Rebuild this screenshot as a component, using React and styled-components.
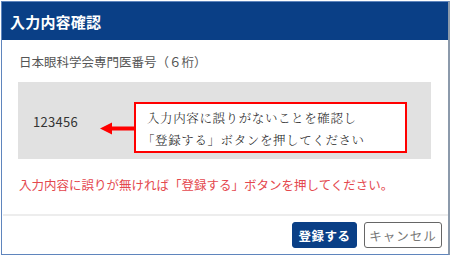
import React from "react";
import styled, { createGlobalStyle } from "styled-components";

const Global = createGlobalStyle`
  html, body { margin: 0; padding: 0; background: #ffffff; }
  body { font-family: "Noto Sans CJK JP", "Noto Sans", sans-serif; }
  * { box-sizing: border-box; }
`;

const Dialog = styled.div`
  margin: 1px 0 0 1px;
  width: 449px;
  height: 254px;
  border-left: 1px solid #5f85bd;
  border-bottom: 1px solid #5f85bd;
  border-right: 2px solid #8c9aab;
  border-top: 1px solid #5f85bd;
  background: #fff;
  display: flex;
  flex-direction: column;
`;

const Header = styled.div`
  height: 38px;
  background: #0a3f86;
  color: #fff;
  font-size: 15px;
  font-weight: 700;
  display: flex;
  align-items: center;
  padding-left: 8px;
  letter-spacing: 0.2px;
`;

const Body = styled.div`
  padding: 12px 17px 0 16px;
  flex: 1;
`;

const Label = styled.div`
  font-size: 12.5px;
  line-height: 20px;
  color: #555;
  padding-left: 1px;
`;

const ValueBox = styled.div`
  position: relative;
  margin-top: 10px;
  height: 77px;
  background: #e1e1e1;
  display: flex;
  align-items: center;
  padding-left: 15px;
`;

const Value = styled.span`
  font-size: 13px;
  color: #333;
  letter-spacing: 0.3px;
  margin-top: 1px;
`;

const Arrow = styled.svg`
  position: absolute;
  left: 82px;
  top: 40px;
`;

const Callout = styled.div`
  position: absolute;
  left: 116px;
  top: 20px;
  width: 273px;
  height: 51px;
  border: 2px solid #ff0000;
  background: #fff;
  padding: 3px 0 0 11px;
  font-family: "Noto Serif CJK JP", "Noto Sans CJK JP", serif;
  font-size: 12.5px;
  font-weight: 300;
  line-height: 22px;
  letter-spacing: 0.6px;
  color: #222;
`;

const Line = styled.div`
  margin-left: ${(p) => p.$indent || 0}px;
`;

const Notice = styled.div`
  margin-top: 16px;
  font-size: 12.5px;
  line-height: 20px;
  color: #e4484e;
  padding-left: 1px;
`;

const Footer = styled.div`
  border-top: 2px solid #ededed;
  height: 40px;
  display: flex;
  justify-content: flex-end;
  align-items: flex-start;
  gap: 7px;
  padding: 6px 6px 0 0;
  margin-left: 1px;
`;

const Button = styled.button`
  height: 26px;
  border-radius: 3px;
  font-family: "Noto Sans CJK JP", sans-serif;
  font-size: 12.5px;
  padding: 0;
  cursor: pointer;
  display: flex;
  align-items: center;
  justify-content: center;
  width: ${(p) => p.$w}px;
  background: ${(p) => (p.$primary ? "#0a3f86" : "#fff")};
  color: ${(p) => (p.$primary ? "#fff" : "#777")};
  font-weight: ${(p) => (p.$primary ? 700 : 400)};
  border: ${(p) => (p.$primary ? "1px solid #0a3f86" : "1.5px solid #666")};
  letter-spacing: ${(p) => (p.$primary ? "0.5px" : "1px")};
`;

export default function App() {
  return (
    <>
      <Global />
      <Dialog>
        <Header>入力内容確認</Header>
        <Body>
          <Label>日本眼科学会専門医番号（６桁）</Label>
          <ValueBox>
            <Value>123456</Value>
            <Arrow width="36" height="13" viewBox="0 0 36 13">
              <rect x="10" y="4.5" width="26" height="4" fill="#ff0000" />
              <polygon points="0,6.5 12,0.5 12,12.5" fill="#ff0000" />
            </Arrow>
            <Callout>
              <Line>入力内容に誤りがないことを確認し</Line>
              <Line $indent={-5}>「登録する」ボタンを押してください</Line>
            </Callout>
          </ValueBox>
          <Notice>入力内容に誤りが無ければ「登録する」ボタンを押してください。</Notice>
        </Body>
        <Footer>
          <Button $primary $w={65}>登録する</Button>
          <Button $w={78}>キャンセル</Button>
        </Footer>
      </Dialog>
    </>
  );
}
